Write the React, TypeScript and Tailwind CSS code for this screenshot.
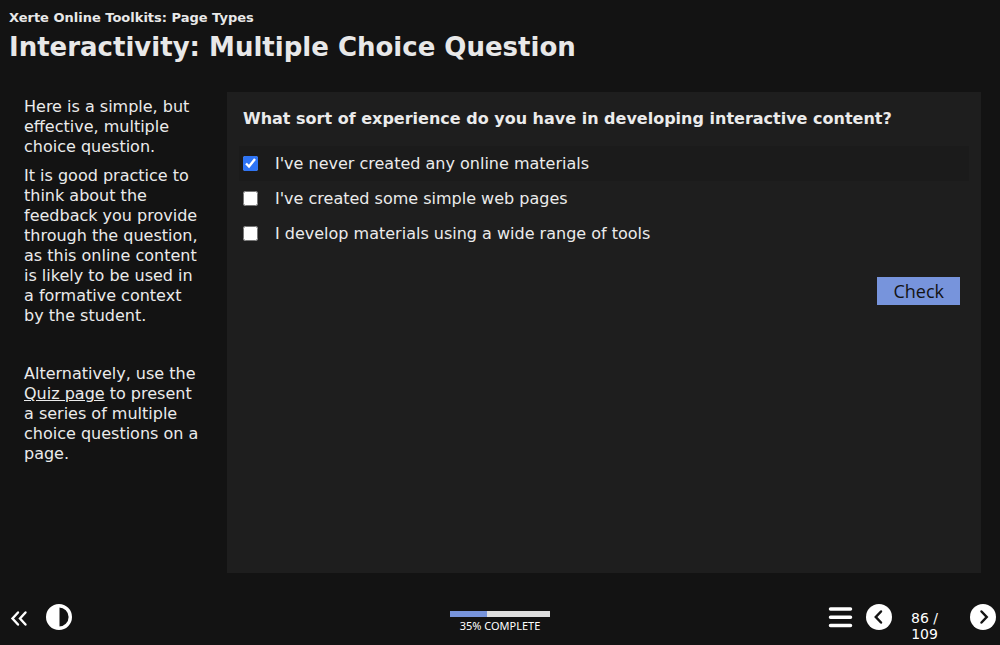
import { useState } from "react";

const options = [
  "I've never created any online materials",
  "I've created some simple web pages",
  "I develop materials using a wide range of tools",
];

const iconButton = "flex h-7 w-7 shrink-0 items-center justify-center";

function Chevron({ d }: { d: string }) {
  return (
    <svg viewBox="0 0 26 26" className="h-[26px] w-[26px]" aria-hidden="true">
      <circle cx="13" cy="13" r="13" fill="#fff" />
      <path d={d} fill="none" stroke="#131313" strokeWidth="2.5" strokeLinecap="round" />
    </svg>
  );
}

export default function App() {
  const [checked, setChecked] = useState([true, false, false]);
  const toggle = (index: number) =>
    setChecked(checked.map((value, i) => (i === index ? !value : value)));

  return (
    <div className="flex min-h-screen flex-col bg-[#131313] font-['Verdana','DejaVu_Sans',sans-serif] text-base text-[#ebebeb]">
      <header className="px-[9px] pt-2 font-bold text-[#e8e8e8]">
        <p className="text-[13px] leading-5">Xerte Online Toolkits: Page Types</p>
        <h1 className="text-[26px] leading-[38px]">Interactivity: Multiple Choice Question</h1>
      </header>

      <main className="flex grow gap-6 pt-[26px] pr-[19px]">
        <section className="w-[203px] shrink-0 pt-[5px] pl-6 leading-5">
          <p className="mb-[9px]">Here is a simple, but effective, multiple choice question.</p>
          <p className="mb-[38px]">
            It is good practice to think about the feedback you provide through the question, as
            this online content is likely to be used in a formative context by the student.
          </p>
          <p>
            Alternatively, use the{" "}
            <a href="#quiz" className="underline">
              Quiz page
            </a>{" "}
            to present a series of multiple choice questions on a page.
          </p>
        </section>

        <section className="flex grow flex-col bg-[#1e1e1e] px-3 pt-[17px]">
          <h2 className="px-1 leading-5 font-bold">
            What sort of experience do you have in developing interactive content?
          </h2>
          <div className="mt-[17px] flex flex-col">
            {options.map((option, index) => (
              <label
                key={option}
                className={
                  checked[index]
                    ? "flex h-[35px] items-center gap-[17px] bg-[#1b1b1b] pl-1"
                    : "flex h-[35px] items-center gap-[17px] pl-1"
                }
              >
                <input
                  type="checkbox"
                  checked={checked[index]}
                  onChange={() => toggle(index)}
                  className="h-[15px] w-[15px] accent-[#2e74f5]"
                />
                <span>{option}</span>
              </label>
            ))}
          </div>
          <button
            type="button"
            className="mt-[26px] mr-[9px] h-7 self-end bg-[#7794dc] px-4 font-['Open_Sans',sans-serif] text-lg leading-7 text-[#131313]"
          >
            Check
          </button>
        </section>
      </main>

      <footer className="grid h-[72px] grid-cols-[1fr_100px_1fr] items-start pt-[30px] text-white">
        <div className="flex gap-3 pl-[5px]">
          <button type="button" aria-label="Hide tools" className={iconButton}>
            <svg viewBox="0 0 28 28" className="h-7 w-7" aria-hidden="true">
              <path
                d="M13 9.500 7.500 15.500l5.500 6M20.500 9.500l-5.500 6 5.500 6"
                fill="none"
                stroke="#fff"
                strokeWidth="2.4"
                strokeLinecap="round"
              />
            </svg>
          </button>
          <button type="button" aria-label="Accessibility options" className={iconButton}>
            <svg viewBox="0 0 26 26" className="h-[26px] w-[26px]" aria-hidden="true">
              <circle cx="13" cy="13" r="11.300" fill="none" stroke="#fff" strokeWidth="3.4" />
              <path d="M13.500 1a12 12 0 0 0 0 24Z" fill="#fff" />
            </svg>
          </button>
        </div>

        <div className="pt-2">
          <div className="h-[6px] bg-[#dedede]">
            <div className="h-full bg-[#7794dc]" style={{ width: "37%" }} />
          </div>
          <p className="text-center font-['Noto_Sans',sans-serif] text-[11px] leading-[18px]">
            35% COMPLETE
          </p>
        </div>

        <nav className="flex justify-end pr-[3px]">
          <button type="button" aria-label="Table of contents" className={iconButton}>
            <svg viewBox="0 0 28 28" className="h-7 w-7" aria-hidden="true">
              <path
                d="M4.500 6h20M4.500 14.300h20M4.500 22.500h20"
                stroke="#fff"
                strokeWidth="3.5"
                strokeLinecap="round"
              />
            </svg>
          </button>
          <button type="button" aria-label="Previous page" className={`${iconButton} ml-[11px]`}>
            <Chevron d="M15 7.500 9.800 13l5.200 5.500" />
          </button>
          <p className="w-[63px] px-3 pt-[7px] text-center text-sm leading-4">86 / 109</p>
          <button type="button" aria-label="Next page" className={`${iconButton} ml-[13px]`}>
            <Chevron d="M11.500 7.500 16.700 13l-5.200 5.500" />
          </button>
        </nav>
      </footer>
    </div>
  );
}
